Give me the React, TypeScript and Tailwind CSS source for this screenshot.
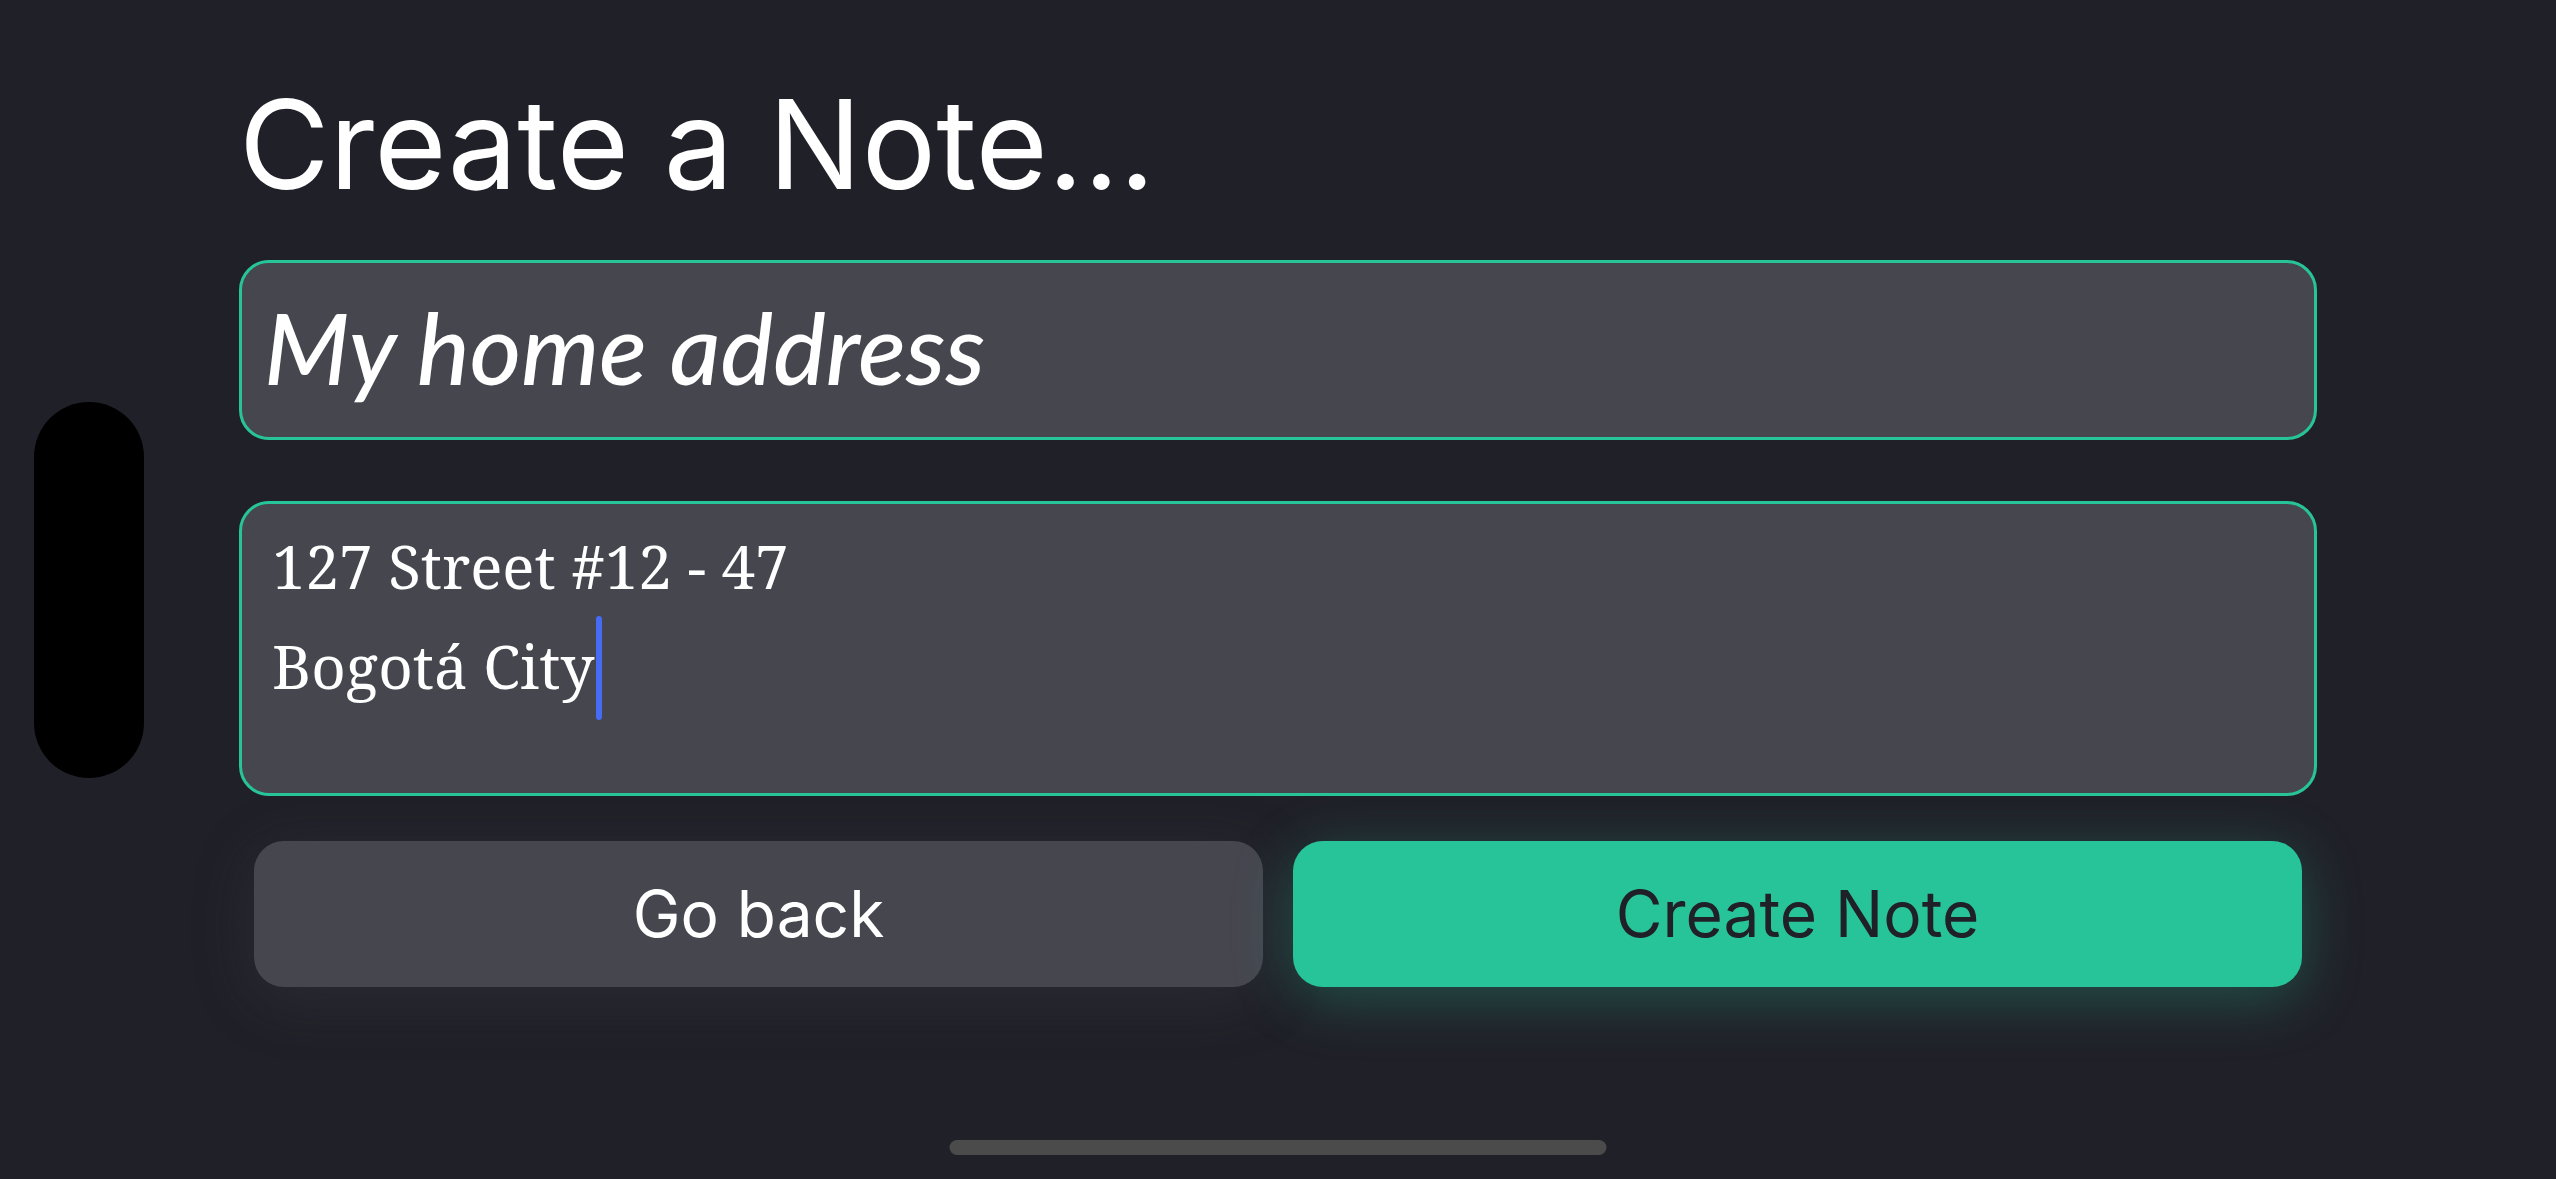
import { useState } from "react";

export default function App() {
  const [title, setTitle] = useState("My home address");
  const [body, setBody] = useState("127 Street #12 - 47\nBogotá City");

  return (
    <div className="relative flex min-h-screen flex-col bg-[#202028] font-[Inter,sans-serif] text-white">
      <div className="flex flex-1 items-stretch">
        {/* Camera cut-out */}
        <aside className="flex w-[239px] shrink-0 items-center pl-[34px]">
          <div className="h-[376px] w-[110px] rounded-full bg-black" />
        </aside>

        <main className="flex min-w-0 flex-1 flex-col pt-[60px]">
          <h1 className="pb-[32px] text-[124px] leading-[168px]">Create a Note...</h1>

          <form className="flex flex-col" onSubmit={(e) => e.preventDefault()}>
            <input
              aria-label="Title"
              value={title}
              onChange={(e) => setTitle(e.target.value)}
              className="mb-[61px] h-[180px] w-full rounded-[30px] border-3 border-[#28c499] bg-[#46464f] px-[22px] pb-[8px] font-[Lato,sans-serif] text-[99px] font-medium italic outline-none"
            />

            <div className="relative mb-[45px]">
              <textarea
                aria-label="Note"
                value={body}
                onChange={(e) => setBody(e.target.value)}
                className="block h-[295px] w-full resize-none rounded-[30px] border-3 border-[#28c499] bg-[#46464f] px-[30px] pt-[12px] font-['Noto_Serif','Liberation_Serif',serif] text-[60px] leading-[100px] caret-transparent outline-none"
              />
              {/* Text cursor */}
              <span className="pointer-events-none absolute top-[115px] left-[357px] h-[104px] w-[6px] rounded-full bg-[#466cf5]" />
            </div>

            <div className="flex gap-[30px] px-[15px]">
              <button
                type="button"
                className="h-[146px] flex-1 rounded-[30px] bg-[#46464f] text-[64px] shadow-[0_12px_60px_rgba(70,70,79,0.3)]"
              >
                Go back
              </button>
              <button
                type="submit"
                className="h-[146px] flex-1 rounded-[30px] bg-[#28c499] text-[64px] text-[#202028] shadow-[0_12px_60px_rgba(40,196,153,0.3)]"
              >
                Create Note
              </button>
            </div>
          </form>
        </main>

        <div className="w-[239px] shrink-0" />
      </div>

      {/* Home indicator */}
      <div className="absolute bottom-[24px] left-1/2 h-[15px] w-[657px] -translate-x-1/2 rounded-full bg-[#4b4b4b]" />
    </div>
  );
}
